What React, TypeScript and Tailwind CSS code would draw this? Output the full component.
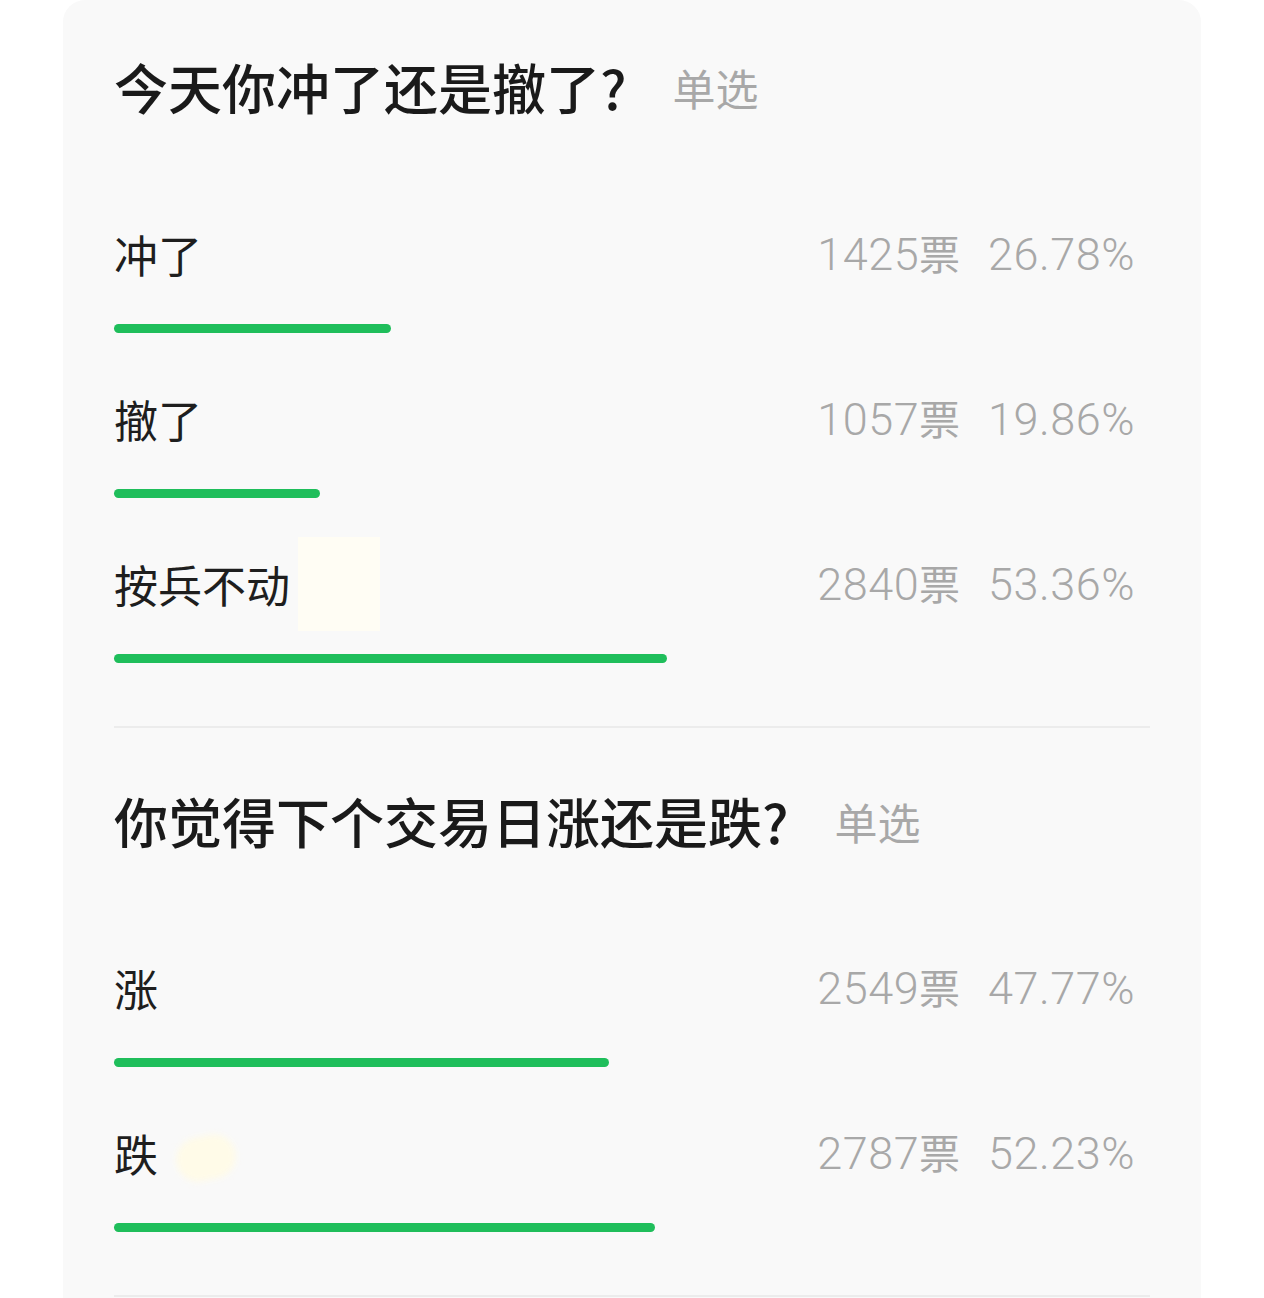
import React from "react";

type Opt = { label: string; votes: number; pct: string; blob?: "rect" | "round" };

const sections: { title: string; opts: Opt[] }[] = [
  {
    title: "今天你冲了还是撤了?",
    opts: [
      { label: "冲了", votes: 1425, pct: "26.78%" },
      { label: "撤了", votes: 1057, pct: "19.86%" },
      { label: "按兵不动", votes: 2840, pct: "53.36%", blob: "rect" },
    ],
  },
  {
    title: "你觉得下个交易日涨还是跌?",
    opts: [
      { label: "涨", votes: 2549, pct: "47.77%" },
      { label: "跌", votes: 2787, pct: "52.23%", blob: "round" },
    ],
  },
];

const cjk = { fontFamily: '"Noto Sans CJK SC", "Noto Sans", sans-serif' };
const num = { fontFamily: 'Roboto, "Noto Sans CJK SC", sans-serif' };

function Option({ o }: { o: Opt }) {
  const w = parseFloat(o.pct);
  return (
    <div className="flex flex-col">
      <div className="flex h-[60px] items-center justify-between pr-[15px]">
        <div className="flex items-center">
          <span className="text-[44px] leading-none text-[#1e1e1e]" style={cjk}>
            {o.label}
          </span>
          {o.blob === "rect" && (
            <span className="ml-[8px] h-[94px] w-[82px] bg-[#fffdf4]" />
          )}
          {o.blob === "round" && (
            <span className="ml-[18px] mt-[10px] h-[44px] w-[60px] -rotate-12 rounded-[22px] bg-[#fffbe8] blur-[3px]" />
          )}
        </div>
        <div className="flex items-center gap-[28px] text-[45px] font-light leading-none tracking-[0.5px] text-[#a8a8a8]" style={num}>
          <span>
            {o.votes}
            <span className="text-[41px] font-normal tracking-normal" style={cjk}>票</span>
          </span>
          <span>{o.pct}</span>
        </div>
      </div>
      <div className="mt-[40px] h-[9px] w-full">
        <div className="h-full rounded-full bg-[#1fbe5b]" style={{ width: `${w}%` }} />
      </div>
    </div>
  );
}

export default function App() {
  return (
    <div className="min-h-[1298px] w-full bg-white">
      <div className="mx-[63px] h-[1298px] overflow-hidden rounded-t-[22px] bg-[#f9f9f9] pl-[51px] pr-[51px] pt-[47px]">
        {sections.map((s, i) => (
          <div key={i} className={i > 0 ? "pt-[53px]" : ""}>
            <div className="flex h-[80px] items-center" style={cjk}>
              <span className="text-[54px] font-medium leading-none text-[#1a1a1a]">{s.title}</span>
              <span className="ml-[46px] text-[43px] leading-none text-[#a8a8a8]">单选</span>
            </div>
            <div className="mt-[97px] flex flex-col gap-[56px]">
              {s.opts.map((o, j) => (
                <Option key={j} o={o} />
              ))}
            </div>
            <div className="mt-[63px] h-[2px] bg-[#ececec]" />
          </div>
        ))}
      </div>
    </div>
  );
}
